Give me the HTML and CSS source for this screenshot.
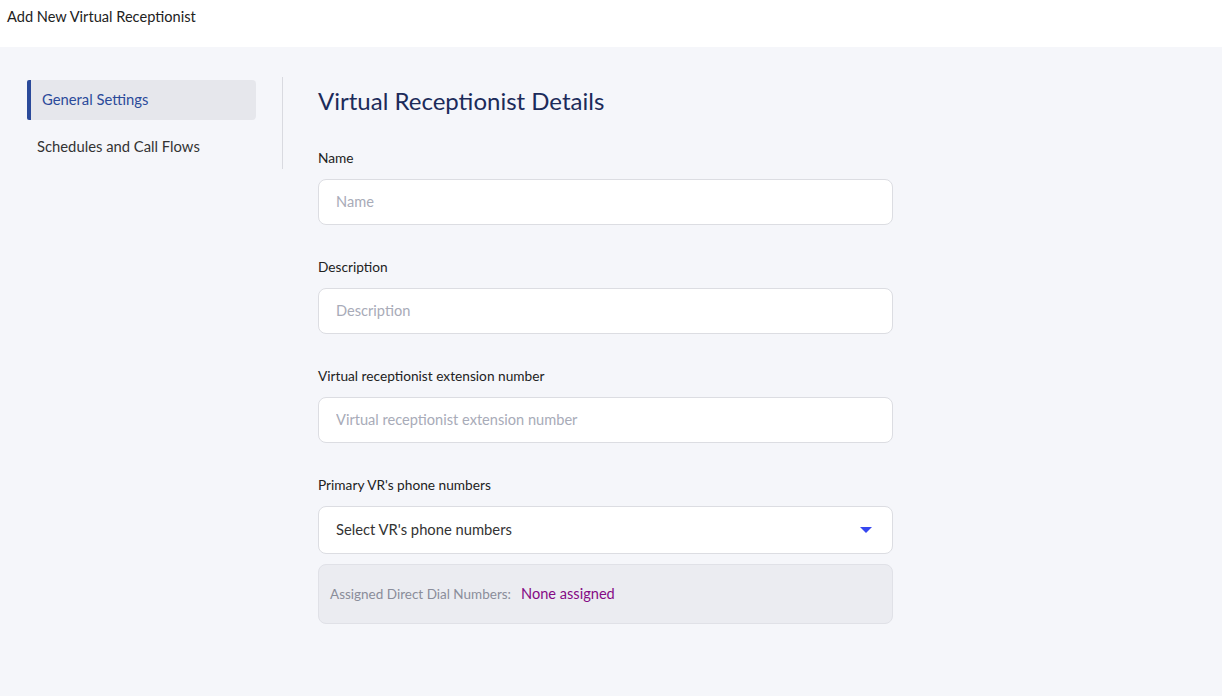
FILE: index.html
```html
<!DOCTYPE html>
<html>
<head>
<meta charset="utf-8">
<title>Add New Virtual Receptionist</title>
<link rel="stylesheet" href="styles.css">
</head>
<body>
<header class="topbar">Add New Virtual Receptionist</header>
<main class="page">
  <nav class="sidenav">
    <div class="nav-item active">General Settings</div>
    <div class="nav-item">Schedules and Call Flows</div>
  </nav>
  <section class="content">
    <h1 class="title">Virtual Receptionist Details</h1>
    <div class="field">
      <label class="label">Name</label>
      <input class="input" type="text" placeholder="Name">
    </div>
    <div class="field">
      <label class="label">Description</label>
      <input class="input" type="text" placeholder="Description">
    </div>
    <div class="field">
      <label class="label">Virtual receptionist extension number</label>
      <input class="input" type="text" placeholder="Virtual receptionist extension number">
    </div>
    <div class="field">
      <label class="label">Primary VR's phone numbers</label>
      <div class="select">
        <span>Select VR's phone numbers</span>
        <svg class="caret" width="14" height="8" viewBox="0 0 14 8"><path d="M1 1h12L7 7z" fill="#3647f0"/></svg>
      </div>
      <div class="assigned">
        <span class="assigned-label">Assigned Direct Dial Numbers:</span>
        <span class="assigned-value">None assigned</span>
      </div>
    </div>
  </section>
</main>
</body>
</html>
```
FILE: styles.css
```css
* { box-sizing: border-box; }
html, body { margin: 0; height: 100%; }
body {
  font-family: "Lato", "Open Sans", sans-serif;
  background: #f5f6fa;
  color: #222;
}
.topbar {
  height: 47px;
  background: #fff;
  padding: 8px 0 0 7px;
  font-size: 14.6px;
  color: #222;
}
.page {
  display: flex;
  padding: 30px 0 0 27px;
}
.sidenav {
  width: 256px;
  padding-right: 26px;
  border-right: 1px solid #d9dae0;
  height: 92px;
  margin-right: 35px;
}
.nav-item {
  height: 40px;
  display: flex;
  align-items: center;
  padding-left: 10px;
  font-size: 14.8px;
  color: #333;
  margin-top: 0;
  margin-bottom: 6px;
}
.nav-item.active {
  margin-top: 3px;
  background: #e6e7ec;
  border-left: 4px solid #2b4a9a;
  border-radius: 2px 4px 4px 2px;
  padding-left: 11px;
  padding-bottom: 3px;
  color: #2b4a9a;
}
.content {
  width: 575px;
}
.title {
  margin: 9px 0 0;
  font-size: 24px;
  font-weight: 400;
  color: #1c2b5a;
  line-height: 30px;
}
.field {
  display: flex;
  flex-direction: column;
}
.label {
  font-size: 13.7px;
  color: #222;
  margin-top: 18px;
  line-height: 17px;
  margin-bottom: 13px;
}
.title + .field .label { margin-top: 33px; }
.input {
  height: 46px;
  border: 1px solid #dcdde2;
  border-radius: 8px;
  background: #fff;
  padding: 0 17px 2px;
  font: inherit;
  font-size: 14.6px;
  margin-bottom: 15px;
  outline: none;
}
.input::placeholder { color: #a8abb8; }
.select {
  height: 48px;
  border: 1px solid #dcdde2;
  border-radius: 8px;
  background: #fff;
  display: flex;
  align-items: center;
  justify-content: space-between;
  padding: 0 19px 2px 17px;
  font-size: 14.75px;
  color: #333;
}
.caret { margin-top: 2px; }
.assigned {
  margin-top: 10px;
  height: 60px;
  border: 1px solid #e0e1e7;
  border-radius: 8px;
  background: #ebecf1;
  display: flex;
  align-items: center;
  padding: 0 11px 1px;
  font-size: 13.5px;
  gap: 10px;
}
.assigned-label { color: #8a8d9a; }
.assigned-value { color: #850a85; font-size: 14.6px; }
```
